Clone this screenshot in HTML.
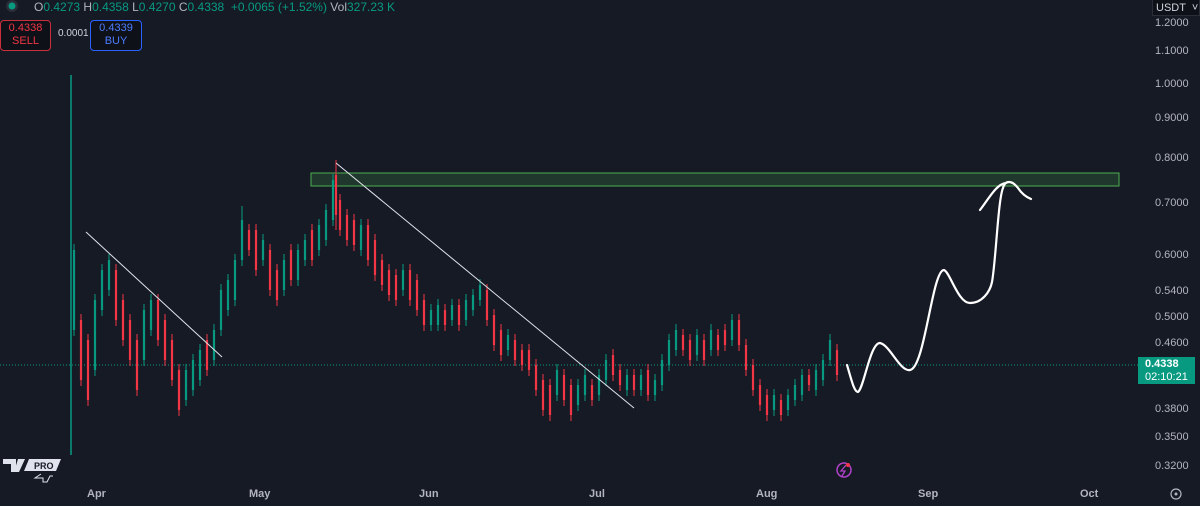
<!DOCTYPE html>
<html><head><meta charset="utf-8"><style>
body{margin:0;background:#161a25;width:1200px;height:506px;overflow:hidden;font-family:"Liberation Sans",sans-serif;position:relative}
.t{position:absolute;color:#b2b5be;font-size:11px}
.ax{position:absolute;left:1155px;color:#b2b5be;font-size:11px}
.d{position:absolute;top:488px;color:#b2b5be;font-size:11px;font-weight:bold}
</style></head><body>
<svg width="1200" height="506" style="position:absolute;left:0;top:0">
<line x1="71" y1="75" x2="71" y2="455" stroke="#089981" stroke-width="1.5"/>
<line x1="0" y1="365" x2="1140" y2="365" stroke="#089981" stroke-width="1" stroke-dasharray="1 2"/>
<rect x="311" y="173" width="808" height="13" fill="rgba(76,175,80,0.2)" stroke="#4caf50" stroke-width="1"/>
<g stroke="#089981">
<path stroke-width="1" d="M74 244V336M95 294V376M102 264V316M109 254V296M144 304V366M151 294V336M186 364V406M193 354V396M200 344V386M214 324V366M221 284V336M228 274V316M235 254V306M242 206V266M263 234V266M284 254V296M298 244V286M305 234V266M319 219V256M326 204V246M333 174V226M361 219V256M403 264V296M431 304V331M438 299V331M452 299V326M466 294V326M473 289V316M480 279V306M508 329V356M557 364V401M578 379V411M585 369V401M599 369V401M606 354V386M627 369V396M641 369V396M655 374V401M662 354V391M669 334V371M676 324V356M697 329V361M711 324V356M732 314V346M774 389V416M788 389V416M795 379V406M802 369V401M816 364V396M823 354V386M830 334V366"/>
<path stroke-width="2.2" d="M74 250V330M95 300V370M102 270V310M109 260V290M144 310V360M151 300V330M186 370V400M193 360V390M200 350V380M214 330V360M221 290V330M228 280V310M235 260V300M242 220V260M263 240V260M284 260V290M298 250V280M305 240V260M319 225V250M326 210V240M333 180V220M361 225V250M403 270V290M431 310V325M438 305V325M452 305V320M466 300V320M473 295V310M480 285V300M508 335V350M557 370V395M578 385V405M585 375V395M599 375V395M606 360V380M627 375V390M641 375V390M655 380V395M662 360V385M669 340V365M676 330V350M697 335V355M711 330V350M732 320V340M774 395V410M788 395V410M795 385V400M802 375V395M816 370V390M823 360V380M830 340V360"/>
</g>
<g stroke="#f23645">
<path stroke-width="1" d="M81 314V386M88 334V406M116 264V326M123 294V346M130 314V366M137 334V396M158 294V346M165 314V366M172 334V386M179 364V416M207 334V376M249 224V256M256 224V276M270 244V296M277 264V306M291 244V286M312 224V266M336 160V230M340 194V236M347 209V246M354 214V251M368 219V266M375 234V281M382 254V291M389 264V301M396 269V306M410 264V306M417 274V316M424 294V331M445 304V331M459 299V331M487 284V326M494 309V351M501 324V361M515 334V366M522 344V371M529 344V376M536 359V396M543 374V416M550 379V421M564 369V406M571 379V421M592 379V406M613 349V381M620 364V391M634 369V396M648 364V401M683 329V356M690 334V366M704 334V366M718 329V356M725 324V351M739 314V351M746 339V376M753 359V396M760 379V411M767 389V421M781 394V421M809 369V391M837 344V381"/>
<path stroke-width="2.2" d="M81 320V380M88 340V400M116 270V320M123 300V340M130 320V360M137 340V390M158 300V340M165 320V360M172 340V380M179 370V410M207 340V370M249 230V250M256 230V270M270 250V290M277 270V300M291 250V280M312 230V260M336 175V215M340 200V230M347 215V240M354 220V245M368 225V260M375 240V275M382 260V285M389 270V295M396 275V300M410 270V300M417 280V310M424 300V325M445 310V325M459 305V325M487 290V320M494 315V345M501 330V355M515 340V360M522 350V365M529 350V370M536 365V390M543 380V410M550 385V415M564 375V400M571 385V415M592 385V400M613 355V375M620 370V385M634 375V390M648 370V395M683 335V350M690 340V360M704 340V360M718 335V350M725 330V345M739 320V345M746 345V370M753 365V390M760 385V405M767 395V415M781 400V415M809 375V385M837 350V375"/>
</g>
<line x1="86" y1="232" x2="222" y2="357" stroke="#e0e3eb" stroke-width="1"/>
<line x1="336" y1="163" x2="634" y2="408" stroke="#e0e3eb" stroke-width="1"/>
<path d="M847 365C851 378 854 392 858 392C864 388 870 343 880 343C890 345 900 372 910 370C925 368 932 270 944 270C950 272 958 303 970 303C982 303 990 292 992 282C996 260 998 200 1003 188C1005 180 1012 180 1018 188C1022 194 1026 197 1031 199M980 210C988 200 996 184 1006 183" fill="none" stroke="#fff" stroke-width="2.2" stroke-linecap="round"/>
<circle cx="844" cy="470" r="7" fill="none" stroke="#b042c8" stroke-width="1.5"/>
<path d="M846 465L841 471H845L842 476" fill="none" stroke="#b042c8" stroke-width="1.3"/>
<circle cx="848" cy="465" r="2" fill="#f23645"/>
<circle cx="1176" cy="494" r="5" fill="none" stroke="#b2b5be" stroke-width="1.2"/>
<circle cx="1176" cy="494" r="1.5" fill="#b2b5be"/>
<g fill="#e0e3eb"><path d="M3 459h13v13h-5v-8h-8z"/><path d="M18 459h7l-6 13h-5z"/><path d="M29 459h32l-5 12H24z"/></g>
<text x="34" y="469" font-size="9" font-weight="bold" fill="#161a25" font-family="Liberation Sans">PRO</text>
<path d="M41 474l-6 4h8v4h4l3-6h3" fill="none" stroke="#e0e3eb" stroke-width="1"/>
<circle cx="12" cy="6" r="6" fill="#2a2e39"/><circle cx="12" cy="6" r="3.5" fill="#089981"/>
</svg>
<div class="t" style="left:34px;top:0px;color:#089981;font-size:12px"><span style="color:#b2b5be">O</span>0.4273 <span style="color:#b2b5be">H</span>0.4358 <span style="color:#b2b5be">L</span>0.4270 <span style="color:#b2b5be">C</span>0.4338 &nbsp;+0.0065 (+1.52%) <span style="color:#b2b5be">Vol</span>327.23 K</div>
<div style="position:absolute;left:0;top:20px;width:49px;height:28px;border:1px solid #c9303c;border-radius:4px;background:#0f1118;text-align:center;font-size:11px;color:#f23645;line-height:13px;padding-top:1px">0.4338<br>SELL</div>
<div class="t" style="left:58px;top:28px;font-size:10px;color:#d1d4dc">0.0001</div>
<div style="position:absolute;left:90px;top:20px;width:50px;height:28px;border:1px solid #2962ff;border-radius:4px;background:#0f1118;text-align:center;font-size:11px;color:#4c7dff;line-height:13px;padding-top:1px">0.4339<br>BUY</div>
<div style="position:absolute;left:1152px;top:0;width:48px;height:16px;background:#0f1118;border:1px solid #2a2e39;border-top:0;color:#d1d4dc;font-size:11px;line-height:16px;padding-left:3px;box-sizing:border-box">USDT &nbsp;˅</div>
<div class="ax" style="top:17px">1.2000</div>
<div class="ax" style="top:45px">1.1000</div>
<div class="ax" style="top:78px">1.0000</div>
<div class="ax" style="top:112px">0.9000</div>
<div class="ax" style="top:152px">0.8000</div>
<div class="ax" style="top:197px">0.7000</div>
<div class="ax" style="top:249px">0.6000</div>
<div class="ax" style="top:285px">0.5400</div>
<div class="ax" style="top:311px">0.5000</div>
<div class="ax" style="top:337px">0.4600</div>
<div style="position:absolute;left:1138px;top:357px;width:57px;height:27px;background:#089981;color:#fff;font-size:11px;line-height:13px;padding:1px 0 0 7px;box-sizing:border-box"><b>0.4338</b><br>02:10:21</div>
<div class="ax" style="top:403px">0.3800</div>
<div class="ax" style="top:431px">0.3500</div>
<div class="ax" style="top:460px">0.3200</div>
<div class="d" style="left:87px">Apr</div>
<div class="d" style="left:249px">May</div>
<div class="d" style="left:419px">Jun</div>
<div class="d" style="left:589px">Jul</div>
<div class="d" style="left:756px">Aug</div>
<div class="d" style="left:918px">Sep</div>
<div class="d" style="left:1080px">Oct</div>
</body></html>
